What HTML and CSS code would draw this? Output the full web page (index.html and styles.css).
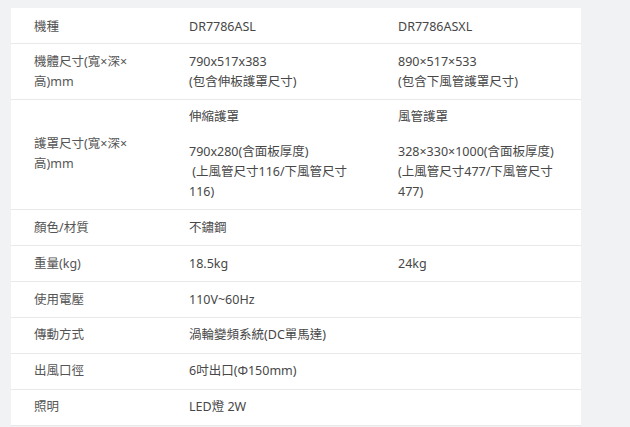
FILE: index.html
```html
<!DOCTYPE html>
<html lang="zh-Hant">
<head>
<meta charset="utf-8">
<link rel="stylesheet" href="styles.css">
</head>
<body>
<div class="page">
  <div class="panel">
    <div class="row">
      <div class="cell label">機種</div>
      <div class="cell">DR7786ASL</div>
      <div class="cell">DR7786ASXL</div>
    </div>
    <div class="row">
      <div class="cell label">機體尺寸(寬×深×<br>高)mm</div>
      <div class="cell">790x517x383<br>(包含伸板護罩尺寸)</div>
      <div class="cell">890×517×533<br>(包含下風管護罩尺寸)</div>
    </div>
    <div class="row">
      <div class="cell label mid">護罩尺寸(寬×深×<br>高)mm</div>
      <div class="cell">
        <p class="sub">伸縮護罩</p>
        <p>790x280(含面板厚度)<br>&nbsp;(上風管尺寸116/下風管尺寸<br>116)</p>
      </div>
      <div class="cell">
        <p class="sub">風管護罩</p>
        <p>328×330×1000(含面板厚度)<br>(上風管尺寸477/下風管尺寸<br>477)</p>
      </div>
    </div>
    <div class="row">
      <div class="cell label">顏色/材質</div>
      <div class="cell">不鏽鋼</div>
      <div class="cell"></div>
    </div>
    <div class="row">
      <div class="cell label">重量(kg)</div>
      <div class="cell">18.5kg</div>
      <div class="cell">24kg</div>
    </div>
    <div class="row">
      <div class="cell label">使用電壓</div>
      <div class="cell">110V~60Hz</div>
      <div class="cell"></div>
    </div>
    <div class="row">
      <div class="cell label">傳動方式</div>
      <div class="cell wide">渦輪變頻系統(DC單馬達)</div>
      <div class="cell"></div>
    </div>
    <div class="row">
      <div class="cell label">出風口徑</div>
      <div class="cell">6吋出口(Φ150mm)</div>
      <div class="cell"></div>
    </div>
    <div class="row">
      <div class="cell label">照明</div>
      <div class="cell">LED燈 2W</div>
      <div class="cell"></div>
    </div>
  </div>
</div>
</body>
</html>
```

FILE: styles.css
```css
html, body {
  margin: 0;
  padding: 0;
  background: #f1f2f4;
}
body {
  font-family: "Noto Sans", "Noto Sans CJK TC", sans-serif;
  font-size: 12.5px;
  color: #474747;
}
.page {
  padding: 8px 0 0 11px;
  height: 427px;
  box-sizing: border-box;
  overflow: hidden;
}
.panel {
  width: 570px;
  background: #fff;
}
.row {
  display: grid;
  grid-template-columns: 155px 209px 1fr;
  border-bottom: 1px solid #e9e9e9;
}
.cell {
  padding: 7.45px 10px 7.45px 23px;
  line-height: 20px;
  white-space: nowrap;
}
.row:first-child .cell {
  padding-top: 9px;
  padding-bottom: 6px;
}
.row:nth-child(2) .cell {
  padding-top: 7.5px;
  padding-bottom: 7px;
}
.label {
  color: #555;
}
.mid {
  align-self: center;
}
.cell p {
  margin: 0;
}
.cell p.sub {
  margin-bottom: 15px;
}
```
